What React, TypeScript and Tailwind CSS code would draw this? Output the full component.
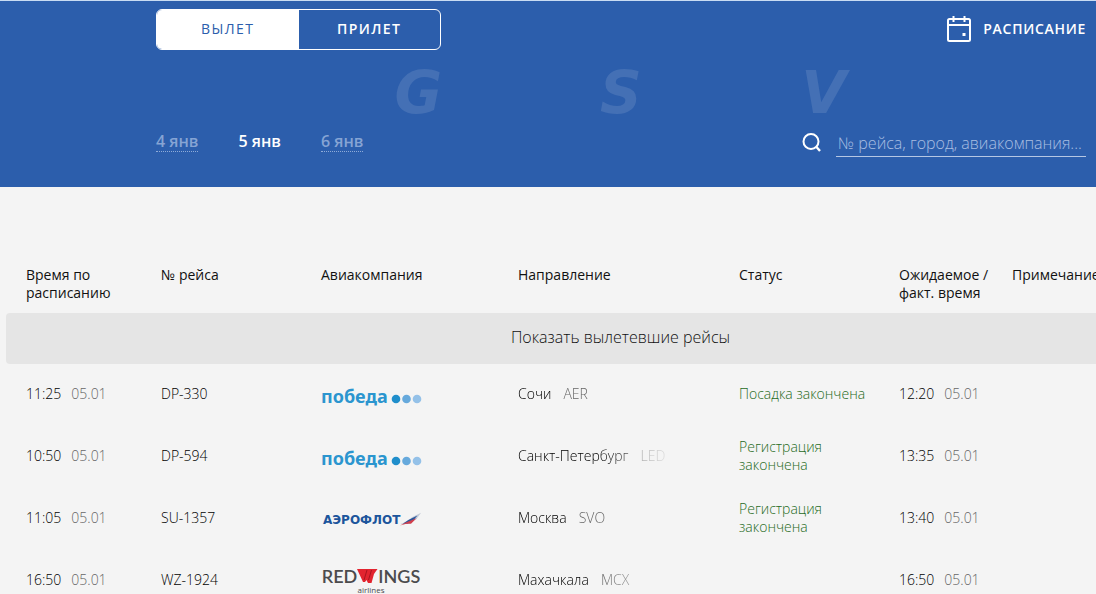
import { useState } from "react";

type Airline = "pobeda" | "aeroflot" | "redwings";

interface Flight {
  time: string;
  date: string;
  number: string;
  airline: Airline;
  city: string;
  code: string;
  status: string;
  actual: string;
}

const FLIGHTS: Flight[] = [
  { time: "11:25", date: "05.01", number: "DP-330", airline: "pobeda", city: "Сочи", code: "AER", status: "Посадка закончена", actual: "12:20" },
  { time: "10:50", date: "05.01", number: "DP-594", airline: "pobeda", city: "Санкт-Петербург", code: "LED", status: "Регистрация закончена", actual: "13:35" },
  { time: "11:05", date: "05.01", number: "SU-1357", airline: "aeroflot", city: "Москва", code: "SVO", status: "Регистрация закончена", actual: "13:40" },
  { time: "16:50", date: "05.01", number: "WZ-1924", airline: "redwings", city: "Махачкала", code: "MCX", status: "", actual: "16:50" },
];

const DAYS = ["4 янв", "5 янв", "6 янв"];

const CalendarIcon = () => (
  <svg width="24" height="26" viewBox="0 0 24 26" fill="none" stroke="currentColor" strokeWidth="2">
    <rect x="1" y="3" width="22" height="22" rx="1.5" />
    <path d="M1 9h22M6.500 0v6M17.500 0v6" />
    <rect x="15.500" y="17" width="3" height="3" fill="currentColor" stroke="none" />
  </svg>
);

const SearchIcon = () => (
  <svg width="20" height="20" viewBox="0 0 20 20" fill="none" stroke="currentColor" strokeWidth="2">
    <circle cx="9" cy="8.500" r="7.500" />
    <path d="M14 13.500l4 4.500" strokeWidth="2.400" />
  </svg>
);

const AirlineLogo = ({ airline }: { airline: Airline }) => {
  if (airline === "pobeda") {
    return (
      <div className="flex items-center pt-1 font-['Noto_Sans',sans-serif] text-lg leading-6 font-bold text-[#2b95cf]">
        победа
        <svg width="34" height="10" viewBox="0 0 34 10" className="mt-1.5">
          <circle cx="8" cy="5" r="4.300" fill="#1f8ecb" />
          <circle cx="18.500" cy="5" r="4.300" fill="#66a9dc" />
          <circle cx="29" cy="5" r="4.300" fill="#94c1e8" />
        </svg>
      </div>
    );
  }

  if (airline === "aeroflot") {
    return (
      <div className="flex items-center pt-1 pl-0.5 font-['DejaVu_Sans',sans-serif] text-xs leading-6 font-bold text-[#1c559c]">
        АЭРОФЛОТ
        <svg width="22" height="16" viewBox="0 0 24 16">
          <path d="M0 12L8 10L13 5L23 0L18 7L10 12Z" fill="#c3cbd8" />
          <path d="M3 12L9 8L19 3L14 9L8 12Z" fill="#2b569b" />
          <path d="M0 14L7 10.500L18 6L12 12L7 12Z" fill="#d23f4c" />
        </svg>
      </div>
    );
  }

  return (
    <div className="flex w-25 flex-col items-center text-[#4b4b4d]">
      <div className="flex items-center font-['Lato',sans-serif] text-lg leading-5 font-semibold">
        RED
        <svg width="21" height="14" viewBox="0 0 21 14">
          <path d="M0 0H20.500L17 5L14.500 14H11L9.500 11L8 13H6Z" fill="#e2242f" />
          <path d="M10 1L7 11M14.500 1L11.500 11" stroke="#a9141f" strokeWidth="1" />
        </svg>
        INGS
      </div>
      <span className="text-[8px] leading-2 font-normal">airlines</span>
    </div>
  );
};

const App = () => {
  const [direction, setDirection] = useState<string>("ВЫЛЕТ");
  const [day, setDay] = useState<string>("5 янв");
  const [query, setQuery] = useState<string>("");

  return (
    <div className="min-h-screen overflow-hidden bg-[#f4f4f4] font-['Open_Sans',sans-serif] text-sm leading-[18px] text-[#111111]">
      <header className="border-t border-[#c9dcf3] bg-[#2c5eac] pt-2 pr-2.5 pb-[30px] pl-39 text-white">
        <div className="flex items-center justify-between">
          <div className="flex h-[41px] w-[285px] overflow-hidden rounded-md border border-white">
            {["ВЫЛЕТ", "ПРИЛЕТ"].map((item) => (
              <button
                key={item}
                onClick={() => setDirection(item)}
                className={`flex-1 cursor-pointer pb-0.5 text-sm tracking-widest ${
                  item === direction ? "bg-white font-medium text-[#2c5eac]" : "font-semibold"
                }`}
              >
                {item}
              </button>
            ))}
          </div>
          <a href="#schedule" className="flex items-center gap-3 pb-0.5 text-sm font-semibold tracking-wider">
            <CalendarIcon />
            РАСПИСАНИЕ
          </a>
        </div>

        <div
          aria-hidden="true"
          className="mx-auto mt-[22px] grid h-[42px] max-w-[608px] grid-cols-3 items-center text-center font-['DejaVu_Sans',sans-serif] text-[58px] leading-[42px] font-bold text-[#4470b5] italic"
        >
          <span>G</span>
          <span>S</span>
          <span>V</span>
        </div>

        <div className="mt-[15px] flex items-start justify-between">
          <div className="flex gap-10 pt-0.5">
            {DAYS.map((item) => (
              <button
                key={item}
                onClick={() => setDay(item)}
                className={`cursor-pointer border-b border-dotted text-base leading-5 font-semibold ${
                  item === day ? "border-transparent text-white" : "border-[#8fabd8] text-[#86a4d4]"
                }`}
              >
                {item}
              </button>
            ))}
          </div>
          <label className="flex items-center gap-3.5">
            <SearchIcon />
            <input
              type="text"
              aria-label="Поиск рейса"
              value={query}
              onChange={(e) => setQuery(e.target.value)}
              placeholder="№ рейса, город, авиакомпания..."
              className="h-7 w-[250px] border-b border-[#b5c7e4] pl-0.5 text-base font-light outline-none placeholder:text-[#a9bfe2]"
            />
          </label>
        </div>
      </header>

      <table className="mt-[70px] ml-1.5 w-full min-w-[1229px] table-fixed text-left">
        <colgroup>
          <col className="w-[135px]" />
          <col className="w-[160px]" />
          <col className="w-[197px]" />
          <col className="w-[221px]" />
          <col className="w-[160px]" />
          <col className="w-[113px]" />
          <col />
        </colgroup>
        <thead>
          <tr className="h-14 align-top [&>th]:pt-[9px] [&>th]:pl-5 [&>th]:font-normal">
            <th>
              Время по
              <br />
              расписанию
            </th>
            <th>№ рейса</th>
            <th>Авиакомпания</th>
            <th>Направление</th>
            <th>Статус</th>
            <th>
              Ожидаемое /
              <br />
              факт. время
            </th>
            <th>Примечание</th>
          </tr>
        </thead>
        <tbody>
          <tr>
            <td colSpan={7}>
              <button className="block h-[51px] w-full cursor-pointer rounded bg-[#e5e5e5] pb-1 text-base font-light">
                Показать вылетевшие рейсы
              </button>
            </td>
          </tr>
          {FLIGHTS.map((flight) => (
            <tr key={flight.number} className="h-[62px] font-light text-black [&>td]:pb-0.5 [&>td]:pl-5">
              <td>
                {flight.time}
                <span className="ml-2.5 text-[#666666]">{flight.date}</span>
              </td>
              <td>{flight.number}</td>
              <td>
                <AirlineLogo airline={flight.airline} />
              </td>
              <td>
                {/* long city names fade out before the status column */}
                <div className="w-[160px] overflow-hidden mask-[linear-gradient(to_right,black_50%,transparent)] whitespace-nowrap">
                  {flight.city}
                  <span className="ml-3 text-[#666666]">{flight.code}</span>
                </div>
              </td>
              <td className="text-[#1f6b23]">{flight.status}</td>
              <td className="whitespace-nowrap">
                {flight.actual}
                <span className="ml-2.5 text-[#666666]">{flight.date}</span>
              </td>
              <td></td>
            </tr>
          ))}
        </tbody>
      </table>
    </div>
  );
};

export default App;
